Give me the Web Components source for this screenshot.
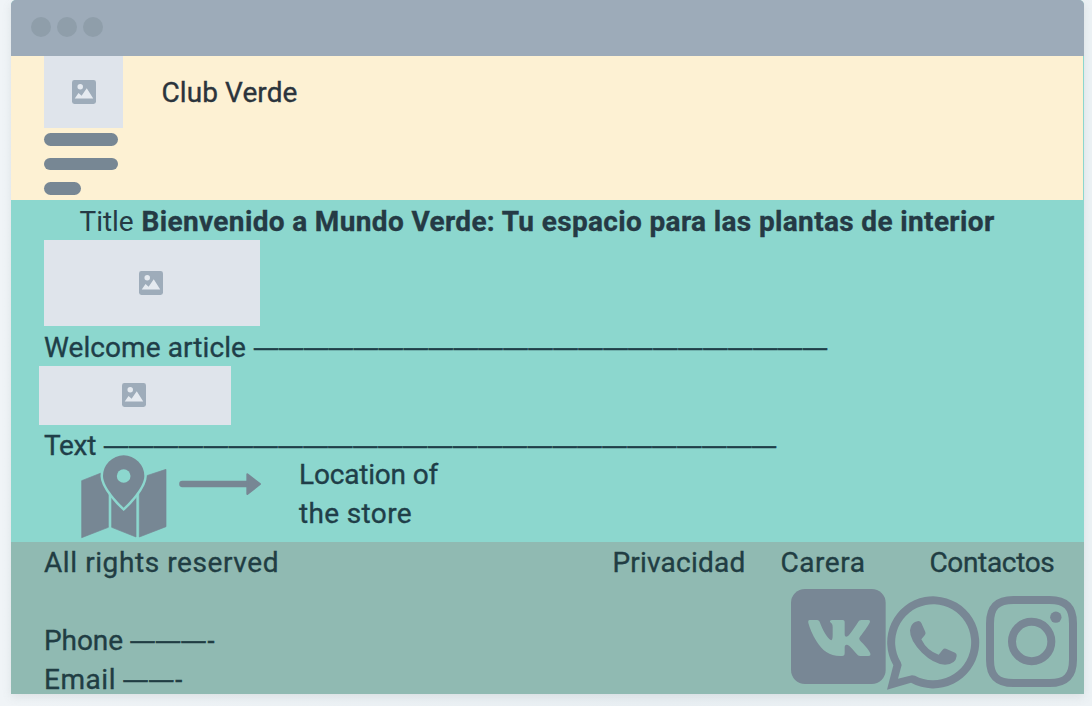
<!DOCTYPE html>
<html lang="es">
<head>
<meta charset="utf-8">
<title>Club Verde</title>
<style>
html,body{margin:0;height:100%;overflow:hidden}
body{background:linear-gradient(90deg,#f0f4f7,#e9eff3 60%,#edf2f5);font:400 28px/39px Roboto,"Liberation Sans",sans-serif;color:#223c45}
</style>
</head>
<body>
<club-page></club-page>
<script>
const define = (name, html, setup) => {
  const t = document.createElement('template');
  t.innerHTML = html;
  customElements.define(name, class extends HTMLElement {
    connectedCallback() {
      if (this.shadowRoot) return;
      this.attachShadow({mode: 'open'}).append(t.content.cloneNode(true));
      if (setup) setup(this);
    }
  });
};

// Text tracked out or in to fill the width given in its "w" attribute.
define('fit-text', `<style>:host{display:block;flex:none;white-space:nowrap;height:39px;-webkit-text-stroke:.35px currentColor}:host([light]){-webkit-text-stroke:0}:host([dash]){font-family:"Liberation Sans",sans-serif;font-size:24px;line-height:37px;-webkit-text-stroke:.6px currentColor}span{display:inline-block;vertical-align:top}</style><span><slot></slot></span>`, el => {
  const span = el.shadowRoot.querySelector('span');
  const w = +el.getAttribute('w');
  el.style.width = w + 'px';
  const n = el.textContent.length;
  span.style.letterSpacing = ((w - span.getBoundingClientRect().width) / n).toFixed(3) + 'px';
});

define('image-box', `<style>:host{display:flex;align-items:center;justify-content:center;background:#dfe4eb;flex:none}svg{width:24px;height:24px;display:block;margin:0 var(--nudge,1px) 0 0}</style>
<svg viewBox="0 0 70 70"><rect width="70" height="70" rx="7" fill="#9eacba"/><circle cx="24" cy="20" r="8" fill="#e5eaf0"/><path d="M8 54L19 38L28 46L43 24L62 54Z" fill="#e5eaf0"/></svg>`);

define('window-bar', `<style>:host{display:flex;box-sizing:border-box;height:56.3px;padding:17px 0 0 19.5px;gap:6px;background:#9dabb9;border-radius:5px 5px 0 0}i{width:20px;height:20px;border-radius:50%;background:#8f9eaa}</style><i></i><i></i><i></i>`);

define('menu-lines', `<style>:host{display:flex;flex-direction:column;gap:12.2px}i{height:12.3px;width:74px;border-radius:7px;background:#778794}i:last-child{width:37px}</style><i></i><i></i><i></i>`);

define('club-header', `<style>
:host{display:block;box-sizing:border-box;height:143.7px;margin-right:1px;padding-left:33px;background:#fdf1d3;color:#2b343c}
.row{display:flex;gap:38.5px}image-box{--nudge:0px;width:79px;height:71.7px}fit-text{margin-top:17px}menu-lines{margin-top:5.5px}
</style><div class="row"><image-box></image-box><fit-text w="136">Club Verde</fit-text></div><menu-lines></menu-lines>`);

define('map-icon', `<style>:host{display:block}svg{display:block;width:86px;height:84px}</style>
<svg viewBox="155 46 258 252"><g fill="#778794" stroke="#778794" stroke-width="2" stroke-linejoin="round"><path d="M157 123L213 101H237V263L157 294Z"/><path d="M247 150H320V292L247 263Z"/><path d="M330 120L352 108L410 89V261L330 292Z"/></g>
<path fill="#778794" stroke="#8cd7ce" stroke-width="15" paint-order="stroke" d="M283 204C274 196 221 144 221 109A62 62 0 0 1 345 109C345 144 292 196 283 204Z"/><circle cx="283" cy="109" r="20.500" fill="#8cd7ce"/></svg>`);

define('arrow-icon', `<style>:host{display:block}svg{display:block;width:82px;height:22px}</style>
<svg viewBox="447 98 246 66"><path d="M457 131H655" stroke="#778794" stroke-width="19" stroke-linecap="round"/><path d="M652 102L690 131L652 161Z" fill="#778794" stroke="#778794" stroke-width="6" stroke-linejoin="round"/></svg>`);

define('club-main', `<style>
:host{display:block;box-sizing:border-box;height:342px;padding:2px 0 0 33px;background:#8cd7ce;color:#203e48}
.line{display:flex;height:38px}.title{padding-left:35.500px;gap:8px;color:#253a45}b{font-weight:700}
.big{width:215.700px;height:86.500px}.small{width:191.500px;height:59px;margin-left:-5px}
.a{gap:8px;margin-top:1.500px;height:38px}.b{gap:8px;margin-top:1px;height:29px}
.place{display:flex}map-icon{margin-left:37.300px}arrow-icon{margin:18.200px 0 0 11.700px}.loc{margin:0 0 0 38px}
</style>
<div class="line title"><fit-text light w="54">Title</fit-text><b><fit-text w="853">Bienvenido a Mundo Verde: Tu espacio para las plantas de interior</fit-text></b></div>
<image-box class="big"></image-box>
<div class="line a"><fit-text w="202">Welcome article</fit-text><fit-text dash w="574">———————————————————————</fit-text></div>
<image-box class="small"></image-box>
<div class="line b"><fit-text w="52">Text</fit-text><fit-text dash w="673">———————————————————————————</fit-text></div>
<div class="place"><map-icon></map-icon><arrow-icon></arrow-icon><div class="loc"><fit-text w="139">Location of</fit-text><fit-text w="113">the store</fit-text></div></div>`);

define('vk-icon', `<style>:host{display:block}svg{display:block;width:94.700px;height:95px}</style>
<svg viewBox="34 27 284 285"><rect x="34" y="27" width="284" height="285" rx="42" fill="#788795"/><path fill="#90bab2" d="M90 120H112C117 120 119 123 121 128C128 148 143 174 153 180C159 183 159 172 159 160V142C159 133 156 130 152 127C149 123 152 120 157 120H189C194 120 195 123 195 127V163C195 172 202 172 208 165C218 153 229 137 235 127C238 122 240 120 245 120H266C271 120 272 123 270 128C264 140 250 158 242 169C237 176 238 178 243 184C252 193 266 207 271 218C274 224 272 228 266 228H242C236 228 233 225 229 220C222 211 215 203 209 198C201 192 195 194 195 202V219C195 225 193 228 187 228C152 230 128 213 110 183C98 164 90 144 86 129C85 123 86 120 90 120Z"/></svg>`);

define('whatsapp-icon', `<style>:host{display:block}svg{display:block;width:92.700px;height:93.700px}</style>
<svg viewBox="320 47 278 281" fill="#788795"><path fill-rule="evenodd" d="M320 328L339 255A138 138 0 1 1 392 307ZM353 295L364 254L361 245A114 114 0 1 1 404 286L395 285Z"/><path d="M404 125L414 122Q420 122 423 128L435 155Q437 160 433 165L423 177Q440 212 475 223L487 208Q491 203 497 205L524 217Q530 220 529 227Q526 252 494 253Q460 251 425 217Q388 180 389 150Q392 130 404 125Z"/></svg>`);

define('instagram-icon', `<style>:host{display:block}svg{display:block;width:91px;height:91px}</style>
<svg viewBox="618 48 273 273" fill="none" stroke="#788795" stroke-width="24"><path d="M700 60H809C858 60 879 81 879 130V239C879 288 858 309 809 309H700C651 309 630 288 630 239V130C630 81 651 60 700 60Z"/><circle cx="755" cy="184.500" r="59"/><circle cx="827.500" cy="111.500" r="17" fill="#788795" stroke="none"/></svg>`);

define('club-footer', `<style>
:host{display:flex;justify-content:space-between;box-sizing:border-box;height:152px;padding:1px 7px 0 33px;background:#90bab2;color:#213d43}
.contact{margin-top:39px}.contact div{display:flex;gap:7.500px}
.links{display:flex;margin-left:-179px}.links fit-text:nth-child(2){margin-left:35px}.links fit-text:nth-child(3){margin-left:64px}
.icons{display:flex;justify-content:flex-end;margin-top:7px}.wa{margin:7px 0 0 .700px}.ig{margin:7px 0 0 6.500px}
</style>
<div><fit-text w="235">All rights reserved</fit-text><div class="contact"><div><fit-text w="79">Phone</fit-text><fit-text dash w="86">———-</fit-text></div><div><fit-text w="72">Email</fit-text><fit-text dash w="61">——-</fit-text></div></div></div>
<div><div class="links"><fit-text w="133">Privacidad</fit-text><fit-text w="85">Carera</fit-text><fit-text w="125">Contactos</fit-text></div>
<div class="icons"><vk-icon></vk-icon><whatsapp-icon class="wa"></whatsapp-icon><instagram-icon class="ig"></instagram-icon></div></div>`);

define('club-page', `<style>
:host{display:block;width:1073px;height:694px;margin-left:11px;background:#8cd7ce;border-radius:5px 5px 0 0;box-shadow:0 3px 10px rgba(90,105,110,.13)}
</style><window-bar></window-bar><club-header></club-header><club-main></club-main><club-footer></club-footer>`);
</script>
</body>
</html>
